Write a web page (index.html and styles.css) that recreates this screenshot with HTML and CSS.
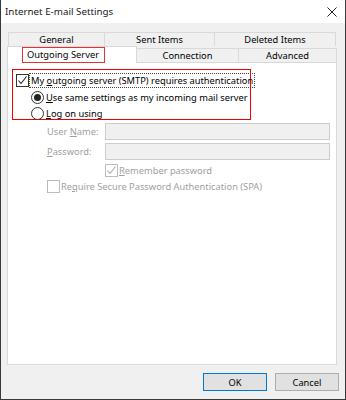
FILE: index.html
```html
<!DOCTYPE html>
<html>
<head>
<meta charset="utf-8">
<link rel="stylesheet" href="styles.css">
</head>
<body>
<div class="window">
  <div class="titlebar">
    <span class="title">Internet E-mail Settings</span>
    <svg class="close" width="10" height="10" viewBox="0 0 10 10"><path d="M0.5 0.5 L9.5 9.5 M9.5 0.5 L0.5 9.5" stroke="#222" stroke-width="1" fill="none"/></svg>
  </div>
  <div class="tabs">
    <div class="row row1">
      <div class="tab t-general">General</div>
      <div class="tab t-sent">Sent Items</div>
      <div class="tab t-deleted">Deleted Items</div>
    </div>
    <div class="row row2">
      <div class="tab sel t-out"><span class="redlabel">Outgoing Server</span></div>
      <div class="tab t-conn">Connection</div>
      <div class="tab t-adv">Advanced</div>
    </div>
  </div>
  <div class="panel">
    <div class="redbox">
      <div class="opt opt-check">
        <span class="cb on"><svg width="11" height="11" viewBox="0 0 11 11"><path d="M1.5 5.5 L4 8.5 L9.5 1.5" stroke="#222" stroke-width="1.1" fill="none"/></svg></span>
        <span class="focus">My <u>o</u>utgoing server (SMTP) requires authentication</span>
      </div>
      <div class="opt opt-radio">
        <span class="rb on"><span class="dot"></span></span>
        <span><u>U</u>se same settings as my incoming mail server</span>
      </div>
      <div class="opt opt-radio">
        <span class="rb"></span>
        <span><u>L</u>og on using</span>
      </div>
    </div>
    <div class="fields">
      <div class="field">
        <span class="lbl">User <u>N</u>ame:</span>
        <span class="input"></span>
      </div>
      <div class="field">
        <span class="lbl"><u>P</u>assword:</span>
        <span class="input"></span>
      </div>
      <div class="opt remember">
        <span class="cb dis"><svg width="11" height="11" viewBox="0 0 11 11"><path d="M1.5 5.5 L4 8.5 L9.5 1.5" stroke="#a8a8a8" stroke-width="1.1" fill="none"/></svg></span>
        <span><u>R</u>emember password</span>
      </div>
      <div class="opt spa">
        <span class="cb dis"></span>
        <span>Re<u>q</u>uire Secure Password Authentication (SPA)</span>
      </div>
    </div>
  </div>
  <div class="footer">
    <button class="btn default">OK</button>
    <button class="btn">Cancel</button>
  </div>
</div>
</body>
</html>
```
FILE: styles.css
```css
html, body { margin: 0; padding: 0; }
body { font-family: "Noto Sans", "Open Sans", sans-serif; font-size: 9.3px; color: #000; white-space: nowrap; }
.window {
  width: 346px; height: 400px; box-sizing: border-box;
  border: 1px solid #3a3a3a; border-top: none;
  background: #f0f0f0;
  display: flex; flex-direction: column;
}
.titlebar {
  height: 23px; background: #fff;
  display: flex; align-items: center; justify-content: space-between;
  padding: 0 8px 0 4px; flex: none;
}
.title { font-size: 9.8px; color: #1a1a1a; }
.close { display: block; margin-top: 1px; }
.tabs { margin-top: 9px; padding-left: 6px; flex: none; }
.row { display: flex; }
.row1 { margin-left: 1px; height: 14px; }
.row2 { height: 16px; align-items: flex-end; position: relative; z-index: 2; }
.tab {
  box-sizing: border-box; border: 1px solid #d9d9d9; border-bottom: none;
  background: #f0f0f0; display: flex; align-items: center; justify-content: center;
  margin-right: -1px; line-height: 1; flex: none;
}
.row1 .tab { height: 14px; }
.row2 .tab { height: 14px; padding-top: 1px; }
.t-general { width: 97px; }
.t-sent { width: 111px; }
.t-deleted { width: 122px; }
.tab.sel { height: 17px !important; background: #fff; margin-bottom: -1px; width: 130px; padding-top: 0; }
.t-conn { width: 103px; }
.t-adv { width: 99px; }
.redlabel {
  border: 1px solid #e83030; width: 83px; height: 16px; box-sizing: border-box;
  display: flex; align-items: center; justify-content: center; margin-right: 18px;
  margin-top: -1px;
}
.panel {
  margin: 0 8px 0 6px; height: 303px; box-sizing: border-box; flex: none;
  border: 1px solid #d9d9d9; background: #fff;
  padding: 6px 0 0 4px;
}
.redbox {
  width: 239px; height: 51px; box-sizing: border-box;
  border: 1px solid #e00; padding: 2px 0 0 3px;
}
.opt { display: flex; align-items: center; height: 16px; }
.opt-check { height: 17px; }
.opt-radio { padding-left: 15px; }
.redbox .opt-radio { height: 16px; }
.cb {
  width: 11px; height: 11px; border: 1px solid #333; background: #fff;
  display: flex; align-items: center; justify-content: center; margin-right: 1px;
  flex: none;
}
.cb.dis { border-color: #bcbcbc; }
.rb {
  width: 11px; height: 11px; border: 1px solid #333; border-radius: 50%;
  background: #fff; display: flex; align-items: center; justify-content: center;
  margin-right: 2px; flex: none;
}
.dot { width: 7px; height: 7px; border-radius: 50%; background: #222; }
.focus { outline: 1px dotted #444; outline-offset: 0; padding: 0 1px; }
.fields { padding-left: 35px; color: #a0a0a0; margin-top: 1px; }
.field { display: flex; align-items: center; height: 20px; }
.lbl { width: 58px; flex: none; }
.input {
  width: 225px; height: 17px; box-sizing: border-box; flex: none;
  border: 1px solid #cccccc; background: #f0f0f0;
}
.remember { padding-left: 58px; height: 16px; margin-top: 1px; }
.spa { height: 16px; }
.footer {
  display: flex; justify-content: flex-end; gap: 8px;
  padding: 8px 6px 0 0;
}
.btn {
  width: 64px; height: 18px; box-sizing: border-box; margin: 0; padding: 0;
  font-family: inherit; font-size: 9.3px; color: #000;
  background: #e1e1e1; border: 1px solid #adadad;
}
.btn.default { border-color: #0078d7; }
```
